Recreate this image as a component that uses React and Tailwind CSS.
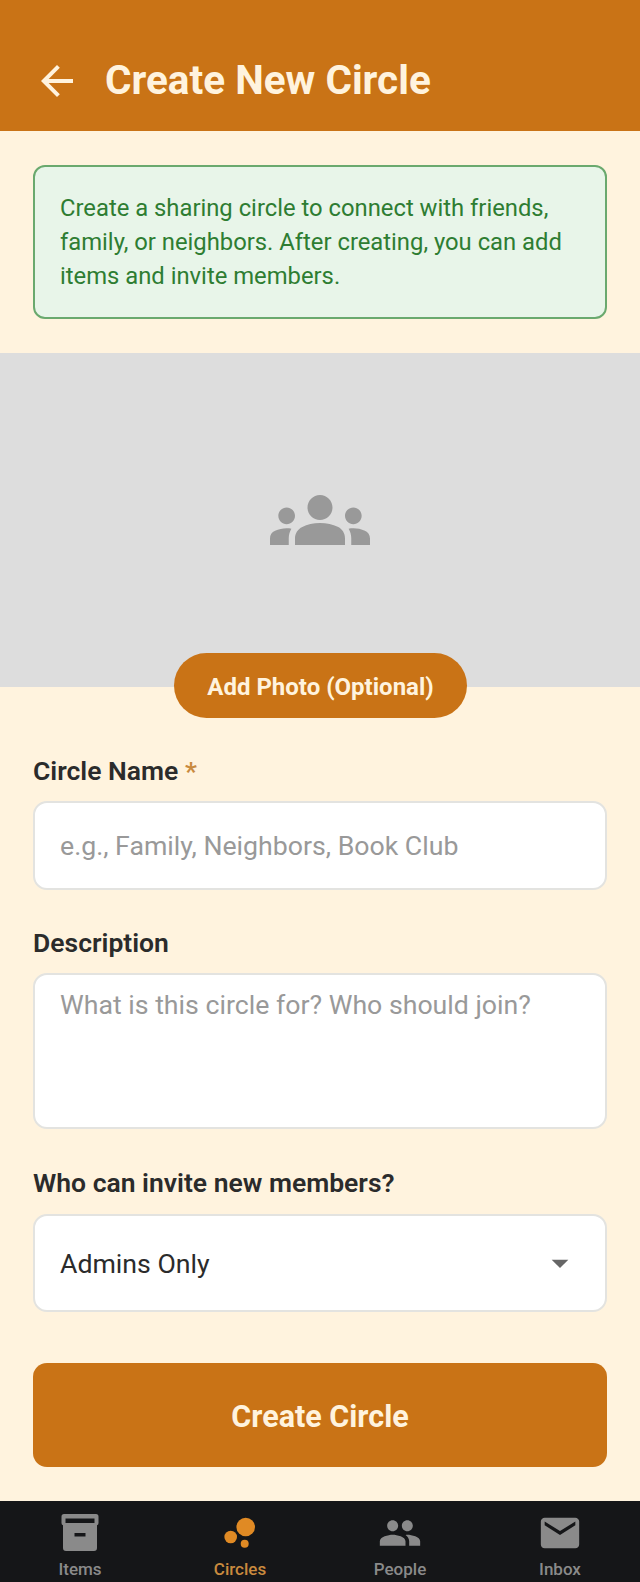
import React from 'react';
import { MdArrowBack, MdGroups, MdPeople, MdEmail, MdArrowDropDown } from 'react-icons/md';

const font = "font-['Roboto',sans-serif]";

function ArchiveIcon() {
  return (
    <svg viewBox="0 0 38 38" className="w-[38px] h-[38px]" fill="#8a8a8a">
      <path
        fillRule="evenodd"
        d="M3 0h32a2.5 2.5 0 0 1 2.5 2.500V9a2.500 2.500 0 0 1-1.500 2.300V34a3 3 0 0 1-3 3H5a3 3 0 0 1-3-3V11.300A2.500 2.500 0 0 1 .5 9V2.500A2.500 2.500 0 0 1 3 0zm1.500 4.500v4.500h29V4.500h-29zM13.500 19v3.500h11V19h-11z"
      />
    </svg>
  );
}

function BubblesIcon() {
  return (
    <svg viewBox="0 0 38 38" className="w-[38px] h-[38px]" fill="#e08a24">
      <circle cx="24.700" cy="13" r="9.300" />
      <circle cx="9.700" cy="23" r="6.300" />
      <circle cx="23.700" cy="29.700" r="4" />
    </svg>
  );
}

function NavItem({ icon, label, active }) {
  return (
    <div className="flex-1 flex flex-col items-center pt-[10px]">
      <div className="h-[44px] flex items-center justify-center">{icon}</div>
      <span className={`mt-[4px] text-[17px] leading-[20px] font-medium ${active ? 'text-[#c98a3e]' : 'text-[#8a8a8a]'}`}>{label}</span>
    </div>
  );
}

export default function App() {
  return (
    <div className={`${font} w-[640px] h-[1582px] bg-[#fff3de] flex flex-col overflow-hidden`}>
      {/* Header */}
      <header className="h-[131px] shrink-0 bg-[#c97316] flex items-center gap-[24px] pl-[33px] pt-[29px]">
        <MdArrowBack className="w-[48px] h-[48px] mt-[1px] text-[#fff3de]" />
        <h1 className="text-[40.500px] leading-[48px] font-bold text-[#fff3de]">Create New Circle</h1>
      </header>

      {/* Intro note */}
      <div className="mx-[33px] mt-[34px] h-[154px] bg-[#e8f5e9] border-2 border-[#6aa96e] rounded-[12px] px-[25px] flex items-center">
        <p className="text-[23.800px] leading-[34px] text-[#2e7d32]">
          Create a sharing circle to connect with friends, family, or neighbors. After creating, you can add items and invite members.
        </p>
      </div>

      {/* Photo placeholder */}
      <div className="relative mt-[34px] h-[334px] shrink-0 bg-[#dddddd] flex items-center justify-center">
        <MdGroups className="w-[100px] h-[100px] text-[#999999]" />
        <button className="absolute left-[174px] bottom-[-31px] w-[293px] h-[65px] pt-[3px] rounded-full bg-[#c97316] text-[#fff3de] text-[24px] font-bold">
          Add Photo (Optional)
        </button>
      </div>

      {/* Form */}
      <div className="px-[33px] mt-[67px] flex flex-col">
        <label className="text-[26.500px] leading-[34px] font-semibold text-[#2b2b2b]">
          Circle Name <span className="text-[#c98a3e]">*</span>
        </label>
        <div className="mt-[13px] h-[89px] pt-[2px] bg-white border-2 border-[#e3e3e0] rounded-[14px] px-[25px] flex items-center text-[26.700px] text-[#999999]">
          e.g., Family, Neighbors, Book Club
        </div>

        <label className="mt-[36px] text-[26.500px] leading-[34px] font-semibold text-[#2b2b2b]">Description</label>
        <div className="mt-[13px] h-[156px] bg-white border-2 border-[#e3e3e0] rounded-[14px] px-[25px] pt-[12px] text-[26.700px] leading-[36px] text-[#999999]">
          What is this circle for? Who should join?
        </div>

        <label className="mt-[37px] text-[26.500px] leading-[34px] font-semibold text-[#2b2b2b]">Who can invite new members?</label>
        <div className="mt-[14px] h-[98px] pt-[2px] bg-white border-2 border-[#e3e3e0] rounded-[14px] pl-[25px] pr-[25px] flex items-center justify-between text-[26.700px] text-[#2b2b2b]">
          Admins Only
          <MdArrowDropDown className="w-[40px] h-[40px] -mt-[2px] text-[#666666]" />
        </div>

        <button className="mt-[51px] h-[104px] pt-[3px] rounded-[14px] bg-[#c97316] text-[#fff3de] text-[30.500px] font-bold">
          Create Circle
        </button>
      </div>

      {/* Bottom tabs */}
      <nav className="mt-auto h-[81px] shrink-0 bg-[#151618] flex">
        <NavItem icon={<ArchiveIcon />} label="Items" />
        <NavItem icon={<BubblesIcon />} label="Circles" active />
        <NavItem icon={<MdPeople className="w-[44px] h-[44px] text-[#8a8a8a]" />} label="People" />
        <NavItem icon={<MdEmail className="w-[46px] h-[46px] text-[#8a8a8a]" />} label="Inbox" />
      </nav>
    </div>
  );
}
